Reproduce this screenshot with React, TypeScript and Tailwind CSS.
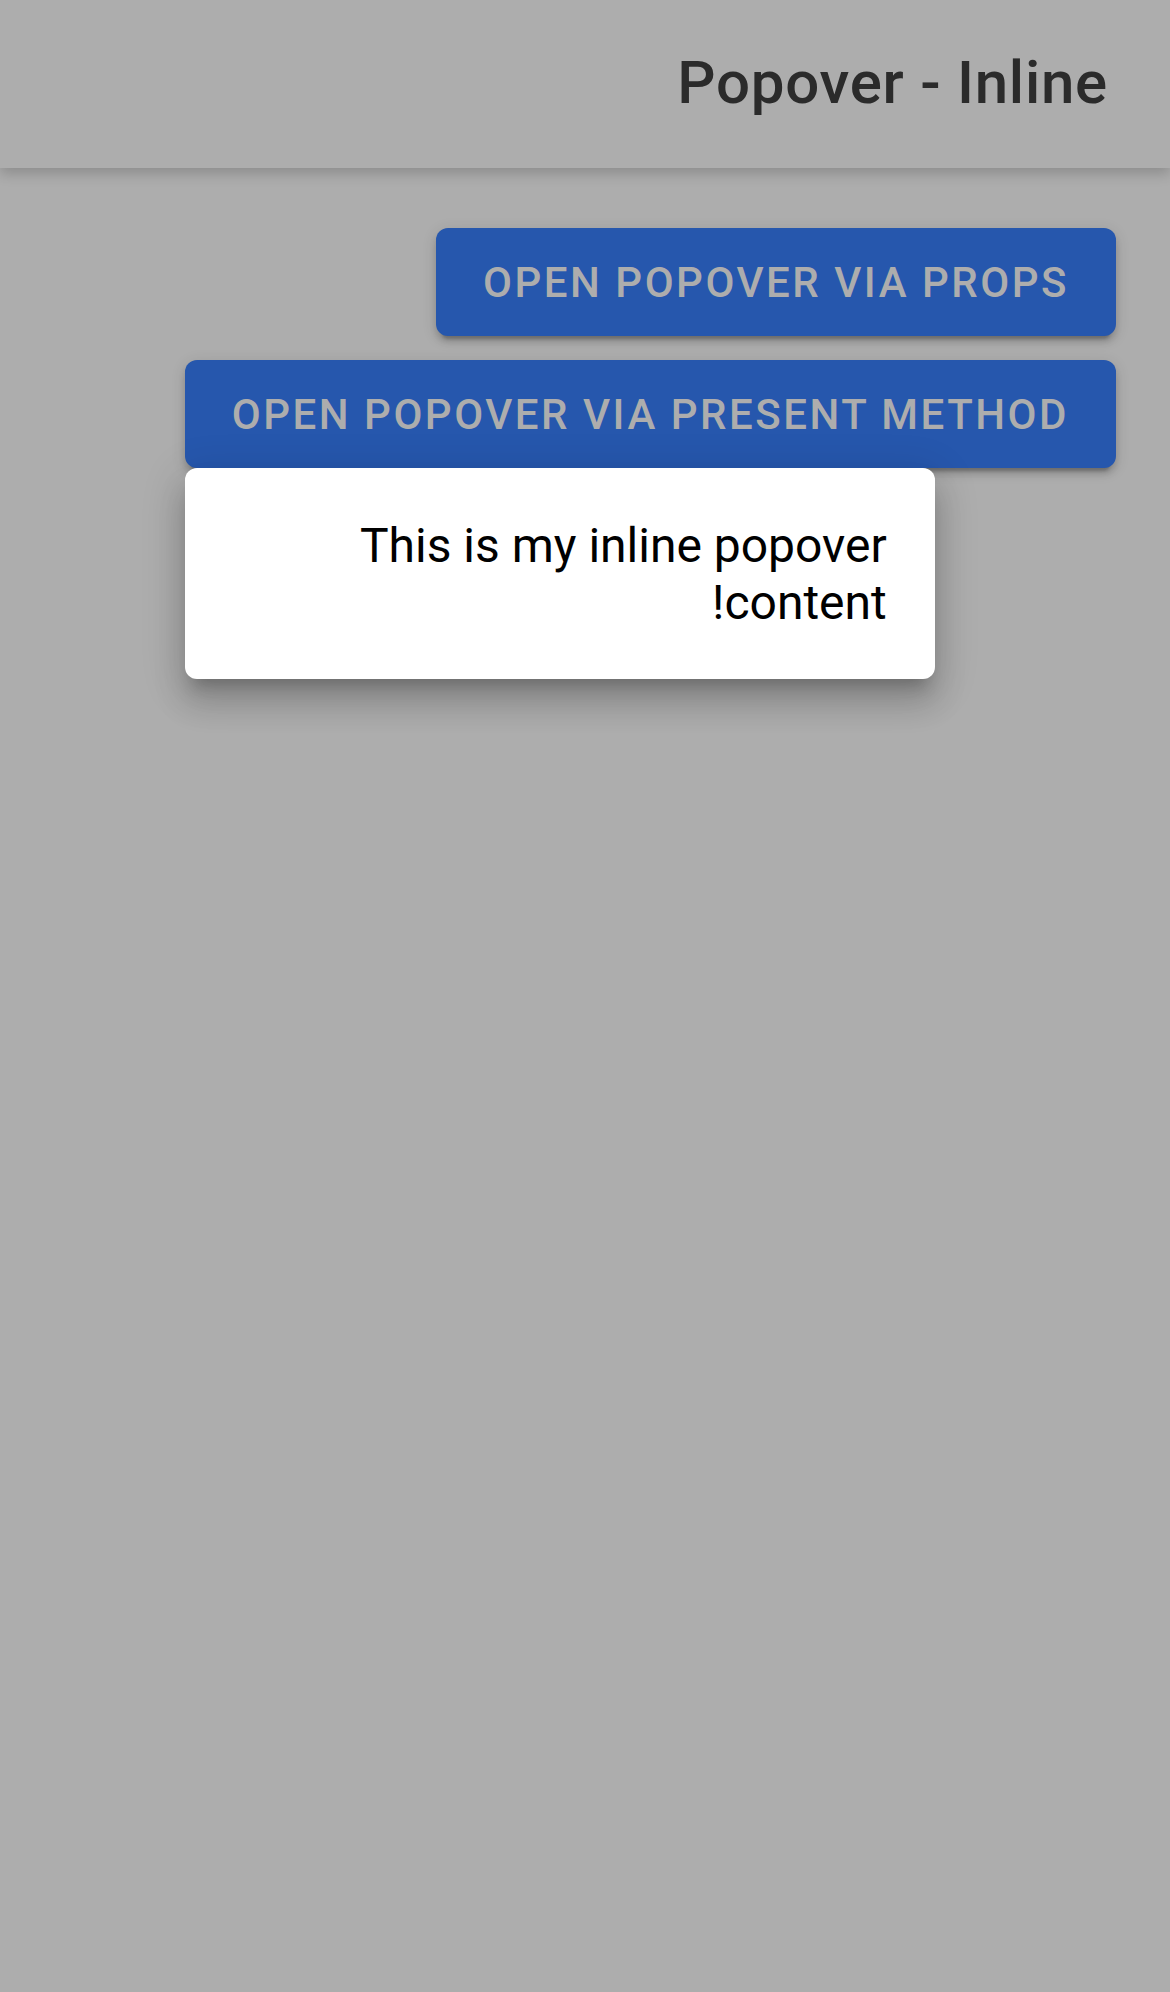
const btnShadow =
    "shadow-[0_9px_3px_-6px_rgba(0,0,0,0.2),0_6px_6px_0_rgba(0,0,0,0.14),0_3px_15px_0_rgba(0,0,0,0.12)]";

export default function App() {
    return (
        <div dir="rtl" className="min-h-[1992px] w-[1170px] bg-[#adadad] font-['Roboto',sans-serif]">
            <header className="relative h-[168px] flex items-center pr-[62px] shadow-[0_6px_12px_0_rgba(0,0,0,0.18)]">
                <h1 className="text-[60px] font-medium tracking-[0.0125em] text-[#2b2b2b] leading-none pb-[2px]">
                    Popover - Inline
                </h1>
            </header>

            <main className="p-[48px] flex flex-col items-start">
                <button
                    className={`my-[12px] mx-[6px] h-[108px] px-[47px] rounded-[12px] bg-[#2657ad] text-[#adadad] text-[42px] font-medium uppercase tracking-[0.06em] ${btnShadow}`}
                >
                    Open popover via props
                </button>

                <div className="relative">
                    <button
                        className={`my-[12px] mx-[6px] h-[108px] px-[47px] rounded-[12px] bg-[#2657ad] text-[#adadad] text-[42px] font-medium uppercase tracking-[0.06em] ${btnShadow}`}
                    >
                        Open popover via present method
                    </button>

                    <div className="absolute top-[120px] left-[6px] w-[750px] bg-white rounded-[12px] px-[48px] pt-[49px] pb-[48px] shadow-[0_15px_15px_-9px_rgba(0,0,0,0.2),0_24px_30px_3px_rgba(0,0,0,0.14),0_9px_42px_6px_rgba(0,0,0,0.12)]">
                        <p className="text-[48px] leading-[57px] text-black">This is my inline popover content!</p>
                    </div>
                </div>
            </main>
        </div>
    );
}
